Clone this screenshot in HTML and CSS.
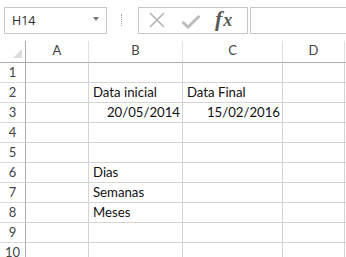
FILE: index.html
```html
<!DOCTYPE html>
<html>
<head>
<meta charset="utf-8">
<link rel="stylesheet" href="styles.css">
</head>
<body>
<div class="toolbar">
  <div class="namebox">
    <span class="name">H14</span>
    <span class="caret"></span>
  </div>
  <div class="dots"></div>
  <div class="buttons">
    <svg class="ico-x" width="18" height="16" viewBox="0 0 18 16"><path d="M2 1 L16 15 M16 1 L2 15" stroke="#b4b4b4" stroke-width="1.6" fill="none"/></svg>
    <svg class="ico-check" width="20" height="14" viewBox="0 0 20 14"><path d="M1.5 7 L7 12 L18.5 1" stroke="#bcbcbc" stroke-width="3" fill="none"/></svg>
    <span class="fx"><i>f</i><i class="x">x</i></span>
  </div>
  <div class="formula"></div>
</div>
<div class="sheet">
  <div class="corner"><span class="tri"></span></div>
  <div class="colh">A</div><div class="colh">B</div><div class="colh">C</div><div class="colh">D</div><div class="colh last"></div>

  <div class="rowh">1</div><div class="cell"></div><div class="cell"></div><div class="cell"></div><div class="cell"></div><div class="cell last"></div>
  <div class="rowh">2</div><div class="cell"></div><div class="cell">Data inicial</div><div class="cell">Data Final</div><div class="cell"></div><div class="cell last"></div>
  <div class="rowh">3</div><div class="cell"></div><div class="cell num">20/05/2014</div><div class="cell num">15/02/2016</div><div class="cell"></div><div class="cell last"></div>
  <div class="rowh">4</div><div class="cell"></div><div class="cell"></div><div class="cell"></div><div class="cell"></div><div class="cell last"></div>
  <div class="rowh">5</div><div class="cell"></div><div class="cell"></div><div class="cell"></div><div class="cell"></div><div class="cell last"></div>
  <div class="rowh">6</div><div class="cell"></div><div class="cell">Dias</div><div class="cell"></div><div class="cell"></div><div class="cell last"></div>
  <div class="rowh">7</div><div class="cell"></div><div class="cell">Semanas</div><div class="cell"></div><div class="cell"></div><div class="cell last"></div>
  <div class="rowh">8</div><div class="cell"></div><div class="cell">Meses</div><div class="cell"></div><div class="cell"></div><div class="cell last"></div>
  <div class="rowh">9</div><div class="cell"></div><div class="cell"></div><div class="cell"></div><div class="cell"></div><div class="cell last"></div>
  <div class="rowh">10</div><div class="cell"></div><div class="cell"></div><div class="cell"></div><div class="cell"></div><div class="cell last"></div>
</div>
</body>
</html>
```
FILE: styles.css
```css
html, body {
  margin: 0;
  padding: 0;
  background: #ffffff;
  overflow: hidden;
}
body {
  width: 346px;
  height: 257px;
  font-family: "Lato", "Open Sans", sans-serif;
}
.toolbar {
  display: flex;
  align-items: center;
  height: 26px;
  padding: 7px 0 0 4px;
}
.namebox {
  box-sizing: border-box;
  width: 103px;
  height: 27px;
  border: 1px solid #c6c6c6;
  display: flex;
  align-items: center;
  justify-content: space-between;
  padding: 0 7px 0 7px;
}
.name {
  font-family: "Open Sans", sans-serif;
  font-size: 12.5px;
  color: #2b2b2b;
  padding-top: 1px;
}
.caret {
  width: 0;
  height: 0;
  border-left: 3.5px solid transparent;
  border-right: 3.5px solid transparent;
  border-top: 4px solid #7a7a7a;
  margin-bottom: 3px;
}
.dots {
  width: 0;
  height: 12px;
  border-left: 1.5px dotted #a8a8a8;
  margin: 0 16px 0 14px;
}
.buttons {
  box-sizing: border-box;
  width: 110px;
  height: 27px;
  border: 1px solid #c6c6c6;
  display: flex;
  align-items: center;
  padding-left: 9px;
}
.ico-x { margin-right: 15px; }
.ico-check { margin-right: 14px; margin-top: 3px; }
.fx {
  font-family: "Liberation Serif", "DejaVu Serif", serif;
  font-weight: bold;
  color: #5a5a5a;
  font-size: 22px;
  line-height: 1;
  margin-top: -2px;
}
.fx i { font-style: italic; }
.fx .x { font-size: 18px; margin-left: 1px; }
.formula {
  box-sizing: border-box;
  flex: 1;
  height: 27px;
  border: 1px solid #c6c6c6;
  border-right: none;
  margin-left: 2px;
}
.sheet {
  margin-top: 8px;
  display: grid;
  grid-template-columns: 26px 63px 94px 100px 62px 1fr;
  grid-template-rows: 22px repeat(10, 20px);
}
.sheet > div {
  box-sizing: border-box;
  border-right: 1px solid #d4d4d4;
  border-bottom: 1px solid #d4d4d4;
  display: flex;
  align-items: flex-end;
  white-space: nowrap;
  overflow: visible;
}
.corner {
  position: relative;
  border-right-color: #ababab !important;
  border-bottom-color: #ababab !important;
}
.tri {
  position: absolute;
  right: 3px;
  bottom: 4px;
  width: 0;
  height: 0;
  border-left: 9px solid transparent;
  border-bottom: 9px solid #dcdcdc;
}
.colh {
  justify-content: center;
  font-size: 13px;
  color: #444;
  padding-bottom: 4px;
  border-bottom-color: #ababab !important;
  border-right-color: #e1e1e1 !important;
}
.rowh {
  justify-content: center;
  font-size: 13px;
  color: #444;
  padding-bottom: 2px;
  border-right-color: #ababab !important;
  border-bottom-color: #d9d9d9 !important;
}
.cell {
  font-size: 13.2px;
  color: #111;
  padding: 0 0 2px 4px;
}
.cell.num {
  justify-content: flex-end;
  padding-right: 2px;
}
.last { border-right: none !important; }
```
